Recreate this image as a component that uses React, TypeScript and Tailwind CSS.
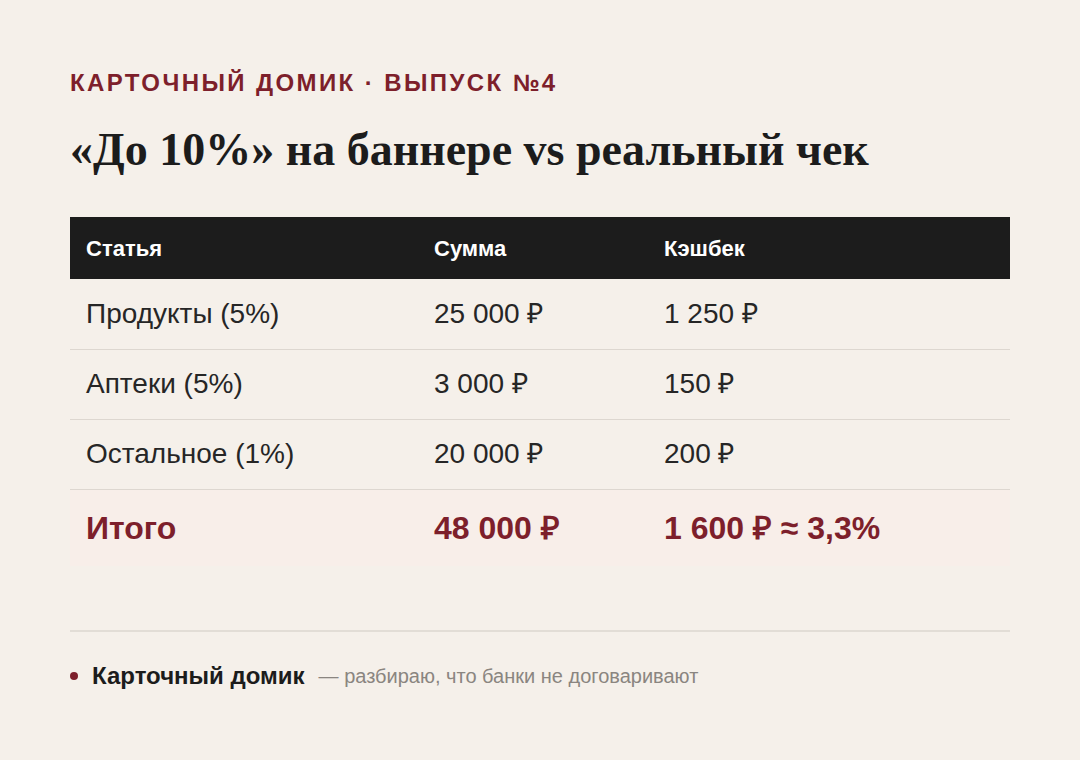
const rows = [
    { item: "Продукты (5%)", sum: "25 000 ₽", cashback: "1 250 ₽" },
    { item: "Аптеки (5%)", sum: "3 000 ₽", cashback: "150 ₽" },
    { item: "Остальное (1%)", sum: "20 000 ₽", cashback: "200 ₽" },
];

export default function App() {
    return (
        <div className="min-h-[760px] bg-[#f5f0ea] px-[70px] pt-[68px] font-['Liberation_Sans',sans-serif]">
            <p className="text-[24px] font-bold uppercase tracking-[0.1em] text-[#7d1f2b] leading-[30px]">
                Карточный домик · Выпуск №4
            </p>
            <h1 className="mt-[24px] font-['Liberation_Serif',serif] text-[46px] font-bold leading-[56px] text-[#1c1c1c]">
                «До 10%» на баннере vs реальный чек
            </h1>

            <table className="mt-[39px] w-[940px] table-fixed border-collapse text-left">
                <colgroup>
                    <col className="w-[348px]" />
                    <col className="w-[230px]" />
                    <col />
                </colgroup>
                <thead>
                    <tr className="h-[62px] bg-[#1c1c1c] text-[22px] font-bold text-white">
                        <th className="px-4">Статья</th>
                        <th className="px-4">Сумма</th>
                        <th className="px-4">Кэшбек</th>
                    </tr>
                </thead>
                <tbody>
                    {rows.map((r) => (
                        <tr
                            key={r.item}
                            className="h-[70px] border-b border-[#ddd7d0] text-[28px] text-[#262626]">
                            <td className="px-4">{r.item}</td>
                            <td className="px-4">{r.sum}</td>
                            <td className="px-4">{r.cashback}</td>
                        </tr>
                    ))}
                    <tr className="h-[77px] bg-[#f8eee9] text-[32px] font-bold text-[#7d1f2b]">
                        <td className="px-4">Итого</td>
                        <td className="px-4">48 000 ₽</td>
                        <td className="px-4">1 600 ₽ ≈ 3,3%</td>
                    </tr>
                </tbody>
            </table>

            <div className="mt-[64px] border-t-2 border-[#e2ddd6] pt-[29px]">
                <div className="flex items-center leading-[30px]">
                    <span className="size-[8px] rounded-full bg-[#7d1f2b]" />
                    <span className="ml-[14px] text-[24px] font-bold text-[#1c1c1c]">
                        Карточный домик
                    </span>
                    <span className="ml-[14px] text-[20px] text-[#8a8580]">
                        — разбираю, что банки не договаривают
                    </span>
                </div>
            </div>
        </div>
    );
}
